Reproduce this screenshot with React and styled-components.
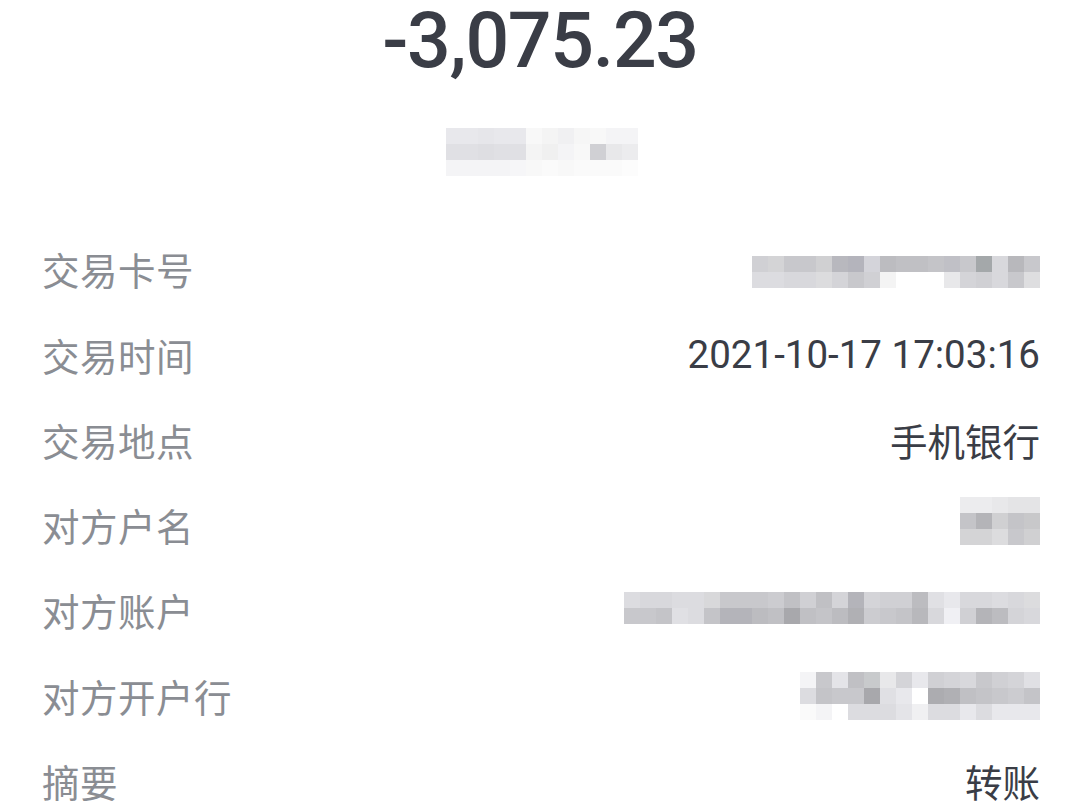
import React from "react";
import styled, { createGlobalStyle } from "styled-components";

const Global = createGlobalStyle`
  html, body {
    margin: 0;
    padding: 0;
    background: #ffffff;
  }
  body {
    font-family: "Noto Sans CJK SC", "Noto Sans", sans-serif;
  }
`;

const Page = styled.div`
  width: 1080px;
  height: 810px;
  overflow: hidden;
  display: flex;
  flex-direction: column;
  background: #ffffff;
`;

const Header = styled.div`
  display: flex;
  flex-direction: column;
  align-items: center;
`;

const Amount = styled.div`
  font-family: Roboto, "Liberation Sans", sans-serif;
  font-weight: 500;
  font-size: 77px;
  line-height: 1.08;
  letter-spacing: -1.3px;
  color: #3a3d46;
`;

const SubWrap = styled.div`
  margin-top: 45px;
  margin-left: 4px;
`;

const List = styled.div`
  margin-top: 50px;
  padding: 0 40px 0 42px;
  display: flex;
  flex-direction: column;
`;

const Row = styled.div`
  height: 85.3px;
  display: flex;
  align-items: center;
  justify-content: space-between;
`;

const Label = styled.span`
  font-size: 37.5px;
  color: #8a8d93;
  letter-spacing: 0.5px;
`;

const Value = styled.span`
  color: #3a3d46;
  font-family: ${(p) =>
    p.$num ? 'Roboto, "Liberation Sans", sans-serif' : '"Noto Sans CJK SC", sans-serif'};
  font-size: ${(p) => (p.$num ? "38.5px" : "37.5px")};
`;

const Grid = styled.div`
  display: grid;
  grid-template-columns: repeat(${(p) => p.$cols}, 16px);
  grid-auto-rows: ${(p) => p.$h || 16}px;
  filter: blur(0.7px);
  margin-top: ${(p) => p.$dy || 0}px;
`;

const Cell = styled.div`
  background: ${(p) => p.$c};
`;

const Mosaic = ({ rows, h, dy }) => (
  <Grid $cols={rows[0].length} $h={h} $dy={dy}>
    {rows.flat().map((c, i) => (
      <Cell key={i} $c={c} />
    ))}
  </Grid>
);

const sub = [
  ["#e8e8ec", "#e8e8ec", "#e6e6ea", "#e8e8ec", "#e8e8ec", "#f8f8f8", "#f4f4f4", "#f0f0f2", "#f6f6f6", "#f8f8f8", "#f4f4f6", "#f4f4f6"],
  ["#e0e0e4", "#e0e0e4", "#dedee2", "#e0e0e4", "#e0e0e4", "#f4f4f4", "#f0f0f0", "#f4f4f6", "#f8f8f8", "#d0d0d4", "#e8e8ea", "#ececee"],
  ["#f4f4f6", "#f4f4f6", "#f4f4f6", "#f4f4f6", "#f6f6f8", "#f8f8f8", "#fafafa", "#f8f8f8", "#fafafa", "#fafafa", "#fafafa", "#fcfcfc"],
];

const card = [
  ["#d0d0d4", "#d4d4d6", "#c8c8cc", "#c8c8cc", "#d0d0d2", "#b8b8be", "#b4b4bc", "#d4d4da", "#bcbcc0", "#c0c0c4", "#c0c0c4", "#c4c4c8", "#c0c0c6", "#c8c8cc", "#a4a8aa", "#d8d8dc", "#b8b8bc", "#c8c8cc"],
  ["#dcdce0", "#dcdce0", "#d8d8dc", "#d8d8dc", "#dcdcde", "#d4d4d8", "#c8c8cc", "#d0d0d4", "#f4f4f4", "#ffffff", "#ffffff", "#ffffff", "#e8e8ea", "#d4d4d8", "#d0d0d4", "#d8d8dc", "#c8c8cc", "#dedee0"],
];

const name = [
  ["#ececee", "#ececee", "#e8e8ea", "#e4e4e6", "#e4e4e6"],
  ["#c4c4c8", "#b4b4b8", "#d0d0d2", "#c4c4c8", "#c8c8ca"],
  ["#d4d4d6", "#d4d4d6", "#dcdcde", "#c8c8cc", "#d0d0d2"],
];

const account = [
  ["#dcdce0", "#d8d8dc", "#d8d8dc", "#dcdce0", "#dcdce0", "#d8d8da", "#c8c8cc", "#c8c8cc", "#c8c8cc", "#ccccd0", "#c0c0c4", "#d0d0d4", "#c0c0c4", "#d4d4d8", "#b4b4ba", "#d4d4d8", "#d0d0d4", "#d0d0d4", "#bcbcc0", "#e0e0e4", "#e8e8ec", "#d8d8dc", "#d8d8dc", "#dcdce0", "#d8d8dc", "#dcdcde"],
  ["#c8c8cc", "#c8c8cc", "#c4c4c8", "#e0e0e4", "#dcdce0", "#c4c4c8", "#b4b4ba", "#b4b4ba", "#bcbcc0", "#c0c0c4", "#a8a8ac", "#c0c0c4", "#c4c4c8", "#bcbcc0", "#b0b0b4", "#ccccd0", "#c8c8cc", "#c4c4c8", "#b8b8bc", "#d8d8dc", "#f0f0f4", "#d0d0d4", "#b4b4b8", "#bcbcc0", "#d4d4d8", "#d8d8dc"],
];

const bank = [
  ["#f4f4f6", "#c8c8cc", "#e4e4e8", "#c0c0c4", "#c8cacc", "#e8e8ea", "#d4d4d8", "#e8e8ec", "#d0d0d4", "#d4d4d8", "#d8d8dc", "#c8c8cc", "#d0d0d4", "#d4d4d8", "#e0e0e4"],
  ["#dcdce0", "#c4c4c8", "#c8c8cc", "#c8c8cc", "#a8a8ac", "#e0e0e4", "#e8e8ec", "#ffffff", "#acacb0", "#b0b0b4", "#c0c0c4", "#c4c4c8", "#c8c8cc", "#ccccd0", "#c4c4c8"],
  ["#fafafa", "#f4f4f6", "#ffffff", "#dcdce0", "#dcdce0", "#dcdce0", "#e4e4e8", "#f0f0f2", "#dcdce0", "#dcdce0", "#e8e8ec", "#dcdce0", "#e8e8ec", "#e8e8ec", "#e8e8ec"],
];

const rows = [
  { label: "交易卡号", mosaic: card, dy: 6 },
  { label: "交易时间", value: "2021-10-17 17:03:16", num: true },
  { label: "交易地点", value: "手机银行" },
  { label: "对方户名", mosaic: name, dy: -8 },
  { label: "对方账户", mosaic: account, dy: -4 },
  { label: "对方开户行", mosaic: bank, dy: 1 },
  { label: "摘要", value: "转账" },
];

const App = () => (
  <Page>
    <Global />
    <Header>
      <Amount>-3,075.23</Amount>
      <SubWrap>
        <Mosaic rows={sub} h={16} />
      </SubWrap>
    </Header>
    <List>
      {rows.map((r) => (
        <Row key={r.label}>
          <Label>{r.label}</Label>
          {r.mosaic ? (
            <Mosaic rows={r.mosaic} dy={r.dy} />
          ) : (
            <Value $num={r.num}>{r.value}</Value>
          )}
        </Row>
      ))}
    </List>
  </Page>
);

export default App;
